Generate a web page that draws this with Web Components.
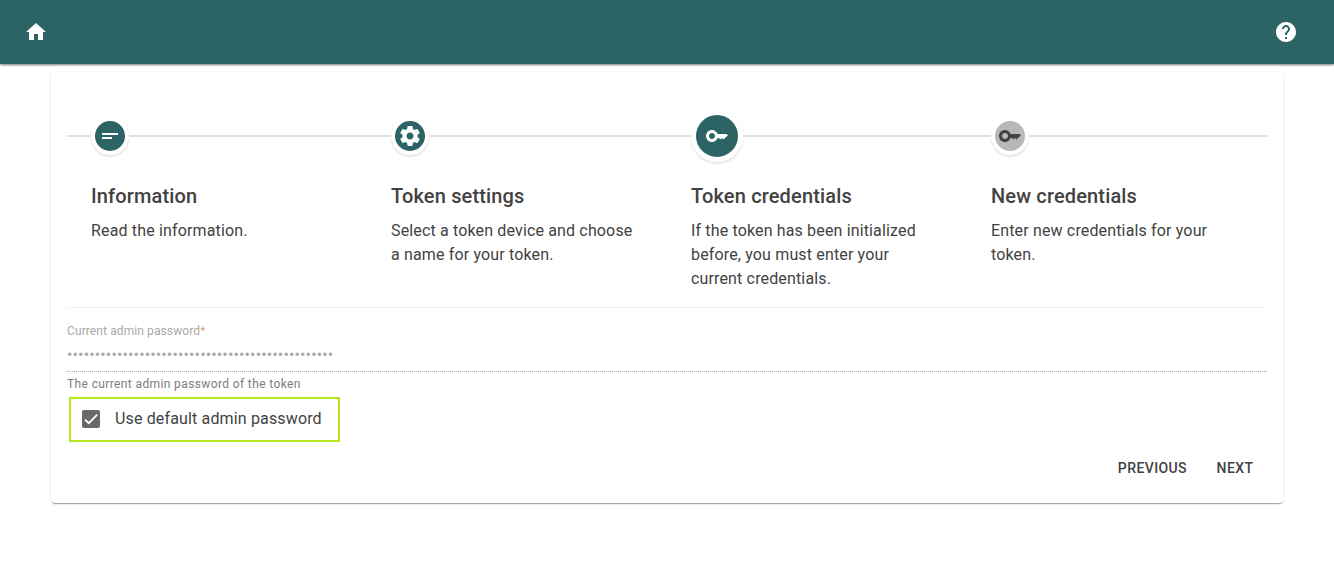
<!DOCTYPE html>
<html lang="en">
<head>
<meta charset="utf-8">
<title>Token wizard</title>
<style>
  html, body { margin: 0; padding: 0; background: #fff; }
  body { font-family: Roboto, "Liberation Sans", sans-serif; color: #424242; }
</style>
</head>
<body>
<app-shell>
  <app-toolbar></app-toolbar>
  <wizard-card>
    <step-list>
      <step-item icon="short" title="Information">Read the information.</step-item>
      <step-item icon="gear" title="Token settings">Select a token device and choose a name for your token.</step-item>
      <step-item icon="key" active title="Token credentials">If the token has been initialized before, you must enter your current credentials.</step-item>
      <step-item icon="key" pending title="New credentials">Enter new credentials for your token.</step-item>
    </step-list>
    <password-field label="Current admin password" hint="The current admin password of the token" length="48"></password-field>
    <check-field checked>Use default admin password</check-field>
    <button-row>
      <flat-button>Previous</flat-button>
      <flat-button>Next</flat-button>
    </button-row>
  </wizard-card>
</app-shell>

<script>
const ICONS = {
  home: 'M10 20v-6h4v6h5v-8h3L12 3 2 12h3v8z',
  help: 'M12 2C6.48 2 2 6.48 2 12s4.48 10 10 10 10-4.48 10-10S17.52 2 12 2zm1 17h-2v-2h2v2zm2.07-7.75l-.9.92C13.45 12.9 13 13.5 13 15h-2v-.5c0-1.1.45-2.1 1.17-2.83l1.24-1.26c.37-.36.59-.86.59-1.41 0-1.1-.9-2-2-2s-2 .9-2 2H8c0-2.21 1.79-4 4-4s4 1.79 4 4c0 .88-.36 1.68-.93 2.25z',
  short: 'M4 9h16v2H4zm0 4h10v2H4z',
  gear: 'M19.43 12.98c.04-.32.07-.64.07-.98s-.03-.66-.07-.98l2.11-1.65c.19-.15.24-.42.12-.64l-2-3.46c-.12-.22-.39-.3-.61-.22l-2.49 1c-.52-.4-1.08-.73-1.69-.98l-.38-2.65C14.46 2.18 14.25 2 14 2h-4c-.25 0-.46.18-.49.42l-.38 2.65c-.61.25-1.17.59-1.69.98l-2.49-1c-.23-.09-.49 0-.61.22l-2 3.46c-.13.22-.07.49.12.64l2.11 1.65c-.04.32-.07.65-.07.98s.03.66.07.98l-2.11 1.65c-.19.15-.24.42-.12.64l2 3.46c.12.22.39.3.61.22l2.49-1c.52.4 1.08.73 1.69.98l.38 2.65c.03.24.24.42.49.42h4c.25 0 .46-.18.49-.42l.38-2.65c.61-.25 1.17-.59 1.69-.98l2.49 1c.23.09.49 0 .61-.22l2-3.46c.12-.22.07-.49-.12-.64l-2.11-1.65zM12 15.5c-1.93 0-3.5-1.57-3.5-3.5s1.57-3.5 3.5-3.5 3.5 1.57 3.5 3.5-1.57 3.5-3.5 3.5z',
  key: 'M12.65 10C11.83 7.67 9.61 6 7 6c-3.31 0-6 2.69-6 6s2.69 6 6 6c2.61 0 4.83-1.67 5.65-4H14l1.5 1.5L17 14l1.5 1.5L20 14l1-1 2-1.5-1.5-1.5H12.65zM7 15c-1.66 0-3-1.34-3-3s1.34-3 3-3 3 1.34 3 3-1.34 3-3 3z'
};

function svgIcon(name, size = 24) {
  return `<svg width="${size}" height="${size}" viewBox="0 0 24 24" fill="currentColor" aria-hidden="true"><path fill-rule="evenodd" d="${ICONS[name]}"/></svg>`;
}

class AppShell extends HTMLElement {
  constructor() {
    super();
    this.attachShadow({ mode: 'open' });
    this.shadowRoot.innerHTML = `
      <style>
        :host { display: block; height: 577px; overflow: hidden; box-sizing: border-box; }
      </style>
      <slot></slot>`;
  }
}

class AppToolbar extends HTMLElement {
  constructor() {
    super();
    this.attachShadow({ mode: 'open' });
    this.shadowRoot.innerHTML = `
      <style>
        :host {
          display: flex; align-items: center; justify-content: space-between;
          height: 64px; padding: 0 36px 0 24px; box-sizing: border-box;
          background: #2c6466; color: #fff;
          box-shadow: 0 1px 2px rgba(0,0,0,.45), 0 1px 3px rgba(0,0,0,.12);
          position: relative;
        }
        svg { display: block; }
      </style>
      ${svgIcon('home')}
      ${svgIcon('help')}`;
  }
}

class WizardCard extends HTMLElement {
  constructor() {
    super();
    this.attachShadow({ mode: 'open' });
    this.shadowRoot.innerHTML = `
      <style>
        :host {
          display: block; width: 1232px; height: 431px; margin: 8px 0 0 51px;
          padding: 0 16px; box-sizing: border-box;
          background: #fff; border-radius: 4px;
          box-shadow: 0 2px 1px -1px rgba(0,0,0,.2), 0 1px 1px 0 rgba(0,0,0,.14), 0 1px 3px 0 rgba(0,0,0,.12);
        }
      </style>
      <slot></slot>`;
  }
}

class StepList extends HTMLElement {
  constructor() {
    super();
    this.attachShadow({ mode: 'open' });
    this.shadowRoot.innerHTML = `
      <style>
        :host {
          display: grid; grid-template-columns: repeat(4, 1fr);
          height: 236px; padding-top: 38px; box-sizing: border-box;
          border-bottom: 1px solid #f2f2f2;
        }
      </style>
      <slot></slot>`;
  }
}

class StepItem extends HTMLElement {
  constructor() {
    super();
    this.attachShadow({ mode: 'open' });
    const title = this.getAttribute('title') || '';
    this.removeAttribute('title');
    this.shadowRoot.innerHTML = `
      <style>
        :host { display: block; letter-spacing: .15px; }
        .head { display: flex; align-items: center; height: 52px; }
        .line { height: 2px; background: #e0e0e0; }
        .lead { width: 24px; }
        .rest { flex: 1; }
        .dot {
          width: 30px; height: 30px; border-radius: 50%;
          display: flex; align-items: center; justify-content: center;
          background: #2c6466; color: #fff;
          border: 4px solid #fff;
          box-shadow: 0 2px 2px rgba(0,0,0,.1), 0 0 1px rgba(0,0,0,.06);
        }
        :host([active]) .dot { width: 42px; height: 42px; border-width: 5px; }
        :host([pending]) .dot { background: #b8b8b8; color: #424242; }
        .text { padding: 18px 28px 0 24px; }
        h3 { margin: 0; font-size: 20px; line-height: 32px; font-weight: 500; color: #424242; }
        p { margin: 7px 0 0; font-size: 16px; line-height: 24px; color: #424242; }
      </style>
      <div class="head">
        <span class="line lead"></span>
        <span class="dot">${svgIcon(this.getAttribute('icon'))}</span>
        <span class="line rest"></span>
      </div>
      <div class="text">
        <h3>${title}</h3>
        <p><slot></slot></p>
      </div>`;
  }
}

class PasswordField extends HTMLElement {
  constructor() {
    super();
    this.attachShadow({ mode: 'open' });
    const dots = '•'.repeat(Number(this.getAttribute('length')) || 0);
    this.shadowRoot.innerHTML = `
      <style>
        :host { display: block; padding-top: 15px; font-size: 12px; }
        label { display: block; line-height: 16px; color: #a9a9a9; letter-spacing: .1px; }
        i { font-style: normal; color: #dda877; }
        .value {
          height: 33px; line-height: 31px; box-sizing: border-box;
          font-size: 16px; letter-spacing: .15px; color: #a6a6a6; border-bottom: 1px dotted #a8a8a8;
        }
        .hint { line-height: 16px; margin-top: 4px; color: #7d7d7d; letter-spacing: .38px; }
      </style>
      <label>${this.getAttribute('label')}<i>*</i></label>
      <div class="value">${dots}</div>
      <div class="hint">${this.getAttribute('hint')}</div>`;
  }
}

class CheckField extends HTMLElement {
  constructor() {
    super();
    this.attachShadow({ mode: 'open' });
    this.shadowRoot.innerHTML = `
      <style>
        :host {
          display: flex; align-items: center; width: 271px; height: 45px; box-sizing: border-box;
          margin: 5px 0 0 2px; padding: 0 0 2px 11px;
          border: 2px solid #b5e61d; font-size: 16px; letter-spacing: .15px; color: #424242;
        }
        .box {
          width: 18px; height: 18px; border-radius: 2px; background: #696969;
          display: block; margin-right: 15px; flex: none;
        }
        svg { display: block; }
      </style>
      <span class="box"><svg width="18" height="18" viewBox="0 0 24 24" aria-hidden="true"><path fill="none" stroke="#fff" stroke-width="2.4" d="M4.1 12.7 9 17.6 20.3 6.3"/></svg></span>
      <span><slot></slot></span>`;
  }
}

class ButtonRow extends HTMLElement {
  constructor() {
    super();
    this.attachShadow({ mode: 'open' });
    this.shadowRoot.innerHTML = `
      <style>
        :host { display: flex; justify-content: flex-end; margin-top: 8px; }
      </style>
      <slot></slot>`;
  }
}

class FlatButton extends HTMLElement {
  constructor() {
    super();
    this.attachShadow({ mode: 'open' });
    this.shadowRoot.innerHTML = `
      <style>
        :host {
          display: inline-block; padding: 0 13.6px 0 16px; height: 36px; line-height: 36px;
          font-size: 14px; font-weight: 500; letter-spacing: .4px; text-transform: uppercase;
          color: #424242; cursor: pointer;
        }
      </style>
      <slot></slot>`;
  }
}

customElements.define('app-shell', AppShell);
customElements.define('app-toolbar', AppToolbar);
customElements.define('wizard-card', WizardCard);
customElements.define('step-list', StepList);
customElements.define('step-item', StepItem);
customElements.define('password-field', PasswordField);
customElements.define('check-field', CheckField);
customElements.define('button-row', ButtonRow);
customElements.define('flat-button', FlatButton);
</script>
</body>
</html>
